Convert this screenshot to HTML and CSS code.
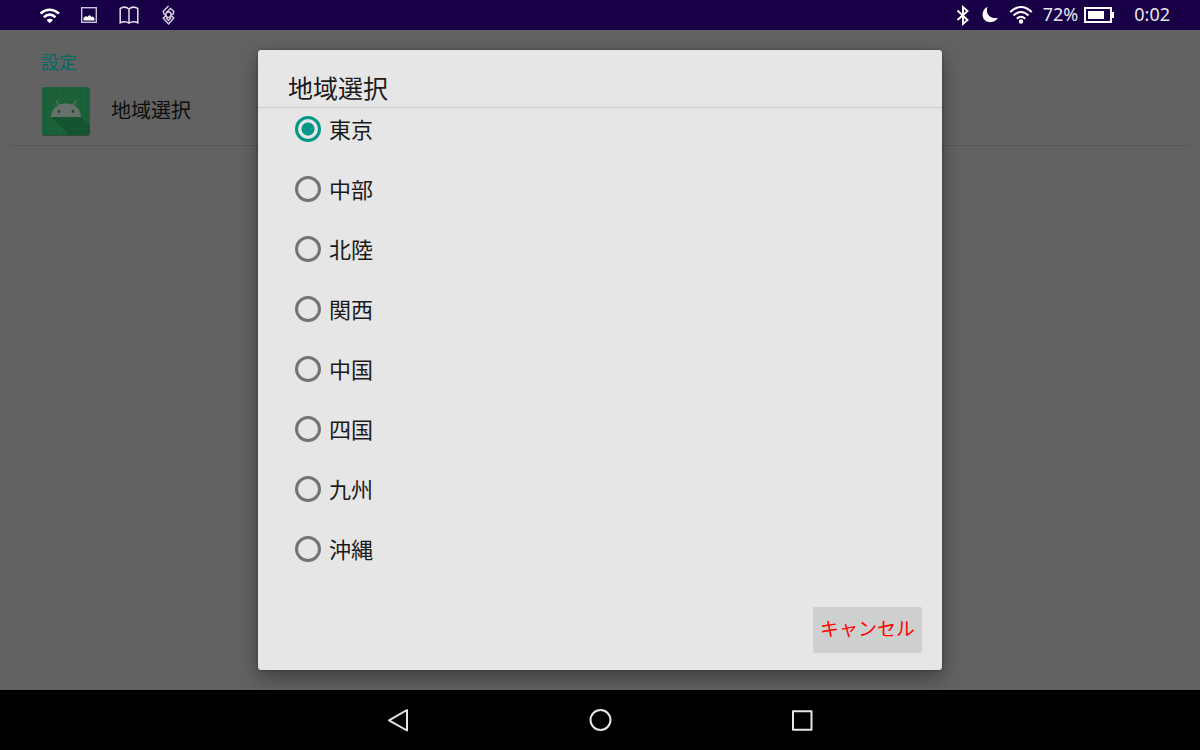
FILE: index.html
```html
<!DOCTYPE html>
<html lang="ja">
<head>
    <meta charset="UTF-8">
    <meta name="viewport" content="width=device-width, initial-scale=1.0">
    <title>地域選択</title>
    <link rel="stylesheet" href="styles.css">
</head>
<body>
    <header class="status-bar">
        <div class="notifications">
            <svg width="24" height="24" viewBox="0 0 24 24" fill="none" stroke="#fff" stroke-width="2.600">
                <path d="M3.500 10.500Q12.500 3 22 10.500M6.800 14.300Q12.700 9 18.500 14.300"/>
                <path d="M9.500 17Q12.700 14.500 16 17L12.700 20.200Z" fill="#fff" stroke="none"/>
            </svg>
            <svg width="24" height="24" viewBox="0 0 24 24">
                <rect x="4.700" y="4.700" width="14.600" height="14.600" fill="none" stroke="#c9c4d8" stroke-width="1.400"/>
                <path d="M6.500 17.500v-2.500l2.500-2 1.500 1 2-2 2 2 1.500-.5 1.500 2v2z" fill="#fff"/>
            </svg>
            <svg width="24" height="24" viewBox="0 0 24 24" fill="none" stroke="#e4e1ec" stroke-width="1.500">
                <path d="M12 6Q8 2.500 3.200 5.500V19.800Q8 17.500 12 20.200Q16 17.500 20.800 19.800V5.500Q16 2.500 12 6V20"/>
            </svg>
            <svg width="24" height="24" viewBox="0 0 24 24" fill="none" stroke="#d8d4e2" stroke-width="1.400">
                <path d="M11.500 3L6.200 8.500 7 11 9 12.500 6.200 15 11.500 21 16.800 15 14 12.500 16.500 10.500 16.800 8.500 13.500 5.500 9.500 9.500"/>
                <path d="M9 14.500L11.500 17.500 14 14.500"/>
                <circle cx="11.500" cy="11.700" r="2.700"/>
            </svg>
        </div>
        <div class="system">
            <svg width="16" height="24" viewBox="0 0 16 24" fill="none" stroke="#fff" stroke-width="1.900">
                <path d="M2.500 7.500L12.500 17 8 21V4L12.500 8 2.500 17"/>
            </svg>
            <svg width="16" height="24" viewBox="0 0 16 24">
                <path d="M5.500 3.800C-.5 7 -1 14.500 3.500 17.800 8 20.700 14 18.800 16 14.800 8.500 16.500 3 11 5.500 3.800Z" fill="#fff"/>
            </svg>
            <svg width="24" height="24" viewBox="0 0 24 24" fill="none" stroke="#fff" stroke-width="2">
                <path d="M1.200 9Q12 -1 22.800 9M4.500 12.500Q12 5.500 19.500 12.500M7.800 15.800Q12 11.500 16.200 15.800"/>
                <circle cx="12" cy="18.500" r="2.200" fill="#fff" stroke="none"/>
            </svg>
            <span class="level">72%</span>
            <svg width="32" height="24" viewBox="0 0 32 24">
                <rect x="2" y="5" width="26" height="14" fill="none" stroke="#fff" stroke-width="2"/>
                <path d="M5 8h16v8H5zM29 9h2v6h-2z" fill="#fff"/>
            </svg>
            <time class="clock">0:02</time>
        </div>
    </header>

    <main class="screen">
        <section class="settings">
            <h2>設定</h2>
            <div class="preference">
                <svg width="50" height="50" viewBox="0 0 50 50">
                    <rect x="1" y="1.500" width="48" height="48.500" rx="3" fill="#35483b"/>
                    <rect x="1" y="1" width="48" height="48" rx="3" fill="#195f37"/>
                    <path d="M7 1v48M13 1v48M19 1v48M25 1v48M31 1v48M37 1v48M43 1v48M1 7h48M1 13h48M1 19h48M1 25h48M1 31h48M1 37h48M1 43h48" stroke="#28693f" stroke-width=".6"/>
                    <path d="M10 31H40L49 40V46Q49 49 46 49H28Z" fill="#12502d" opacity=".75"/>
                    <path d="M10 31Q11 18 25 17.500 39 18 40 31Z" fill="#69706b"/>
                    <path d="M15 14.500L18 20M35 14.500L32 20" stroke="#69706b" stroke-width="1.200"/>
                    <circle cx="18" cy="25.500" r="1.400" fill="#194b30"/>
                    <circle cx="32" cy="25.500" r="1.400" fill="#194b30"/>
                </svg>
                <span>地域選択</span>
            </div>
        </section>

        <div class="overlay">
            <form class="dialog" role="dialog" aria-labelledby="dialog-title">
                <h1 id="dialog-title">地域選択</h1>
                <div class="regions">
                    <label><input type="radio" name="region" value="tokyo" checked><span>東京</span></label>
                    <label><input type="radio" name="region" value="chubu"><span>中部</span></label>
                    <label><input type="radio" name="region" value="hokuriku"><span>北陸</span></label>
                    <label><input type="radio" name="region" value="kansai"><span>関西</span></label>
                    <label><input type="radio" name="region" value="chugoku"><span>中国</span></label>
                    <label><input type="radio" name="region" value="shikoku"><span>四国</span></label>
                    <label><input type="radio" name="region" value="kyushu"><span>九州</span></label>
                    <label><input type="radio" name="region" value="okinawa"><span>沖縄</span></label>
                </div>
                <div class="actions">
                    <button type="button" class="cancel">キャンセル</button>
                </div>
            </form>
        </div>
    </main>

    <nav class="nav-bar">
        <button type="button" aria-label="戻る">
            <svg width="26" height="26" viewBox="0 0 26 26" fill="none" stroke="#e6e6e6" stroke-width="2" stroke-linejoin="round">
                <path d="M22 3V23.500L4 13.300Z"/>
            </svg>
        </button>
        <button type="button" aria-label="ホーム">
            <svg width="26" height="26" viewBox="0 0 26 26" fill="none" stroke="#e6e6e6" stroke-width="2">
                <circle cx="13.500" cy="13" r="10"/>
            </svg>
        </button>
        <button type="button" aria-label="履歴">
            <svg width="26" height="26" viewBox="0 0 26 26" fill="none" stroke="#e6e6e6" stroke-width="2" stroke-linejoin="round">
                <rect x="4" y="4.300" width="18.500" height="18.500"/>
            </svg>
        </button>
    </nav>
</body>
</html>
```

FILE: styles.css
```css
* {
    box-sizing: border-box;
}
body {
    font-family: "Noto Sans", "Noto Sans CJK JP", sans-serif;
    background-color: #000;
    color: #1b1b1b;
    margin: 0;
    min-height: 100vh;
    display: flex;
    flex-direction: column;
}
svg {
    display: block;
    flex: none;
}
h1, h2 {
    margin: 0;
    font-weight: normal;
}
.status-bar {
    height: 30px;
    padding: 0 30px 2px 37px;
    display: flex;
    justify-content: space-between;
    align-items: center;
    background-color: #170045;
    color: #e8e6ee;
    font-size: 18px;
    line-height: 24px;
}
.status-bar svg {
    margin-top: 2px;
}
.notifications {
    display: flex;
    gap: 16px;
}
.system {
    display: flex;
    align-items: center;
    gap: 11px;
}
.level {
    margin: 0 -6px 0 -1px;
}
.clock {
    margin-left: 8px;
}
.screen {
    position: relative;
    flex: 1;
    display: flex;
    flex-direction: column;
    background-color: #626262;
}
.settings {
    margin: 0 10px;
    padding: 19px 31px 9px;
    border-bottom: 1px solid #575757;
}
.settings h2 {
    color: #006c62;
    font-size: 18px;
    line-height: 26px;
    margin-bottom: 11px;
}
.preference {
    display: flex;
    align-items: center;
    gap: 20px;
    color: #0d0d0d;
    font-size: 20px;
}
.preference span,
.regions span {
    padding-bottom: 3px;
}
.overlay {
    position: absolute;
    inset: 0;
    padding: 20px 0;
    display: flex;
    justify-content: center;
    overflow: hidden;
}
.dialog {
    width: 57%;
    display: flex;
    flex-direction: column;
    background-color: #e6e6e6;
    border-radius: 3px;
    box-shadow: 0 8px 20px rgba(0, 0, 0, 0.35), 0 0 3px rgba(0, 0, 0, 0.4);
}
.dialog h1 {
    padding: 20px 30px 1px;
    border-bottom: 1px solid #cacdcd;
    font-size: 25px;
    line-height: 36px;
}
.regions {
    flex: 1;
    padding: 0 37px;
    display: flex;
    flex-direction: column;
    align-items: flex-start;
    gap: 18px;
}
.regions label {
    height: 42px;
    display: flex;
    align-items: center;
    gap: 8px;
    font-size: 22px;
}
.regions input {
    appearance: none;
    width: 26px;
    height: 26px;
    margin: 0;
    border: 3px solid #737373;
    border-radius: 50%;
}
.regions input:checked {
    border-color: #009688;
    background: radial-gradient(circle, #009688 6px, transparent 7px);
}
.actions {
    padding: 0 20px 17px;
    display: flex;
    justify-content: flex-end;
}
.cancel {
    height: 46px;
    padding: 0 7px 4px;
    border: none;
    border-radius: 2px;
    background-color: #cdd0cf;
    color: #ff0000;
    font-family: inherit;
    font-size: 19px;
}
.nav-bar {
    height: 60px;
    display: flex;
    justify-content: center;
    align-items: center;
    gap: 176px;
}
.nav-bar button {
    padding: 0;
    border: none;
    background: none;
}
```
